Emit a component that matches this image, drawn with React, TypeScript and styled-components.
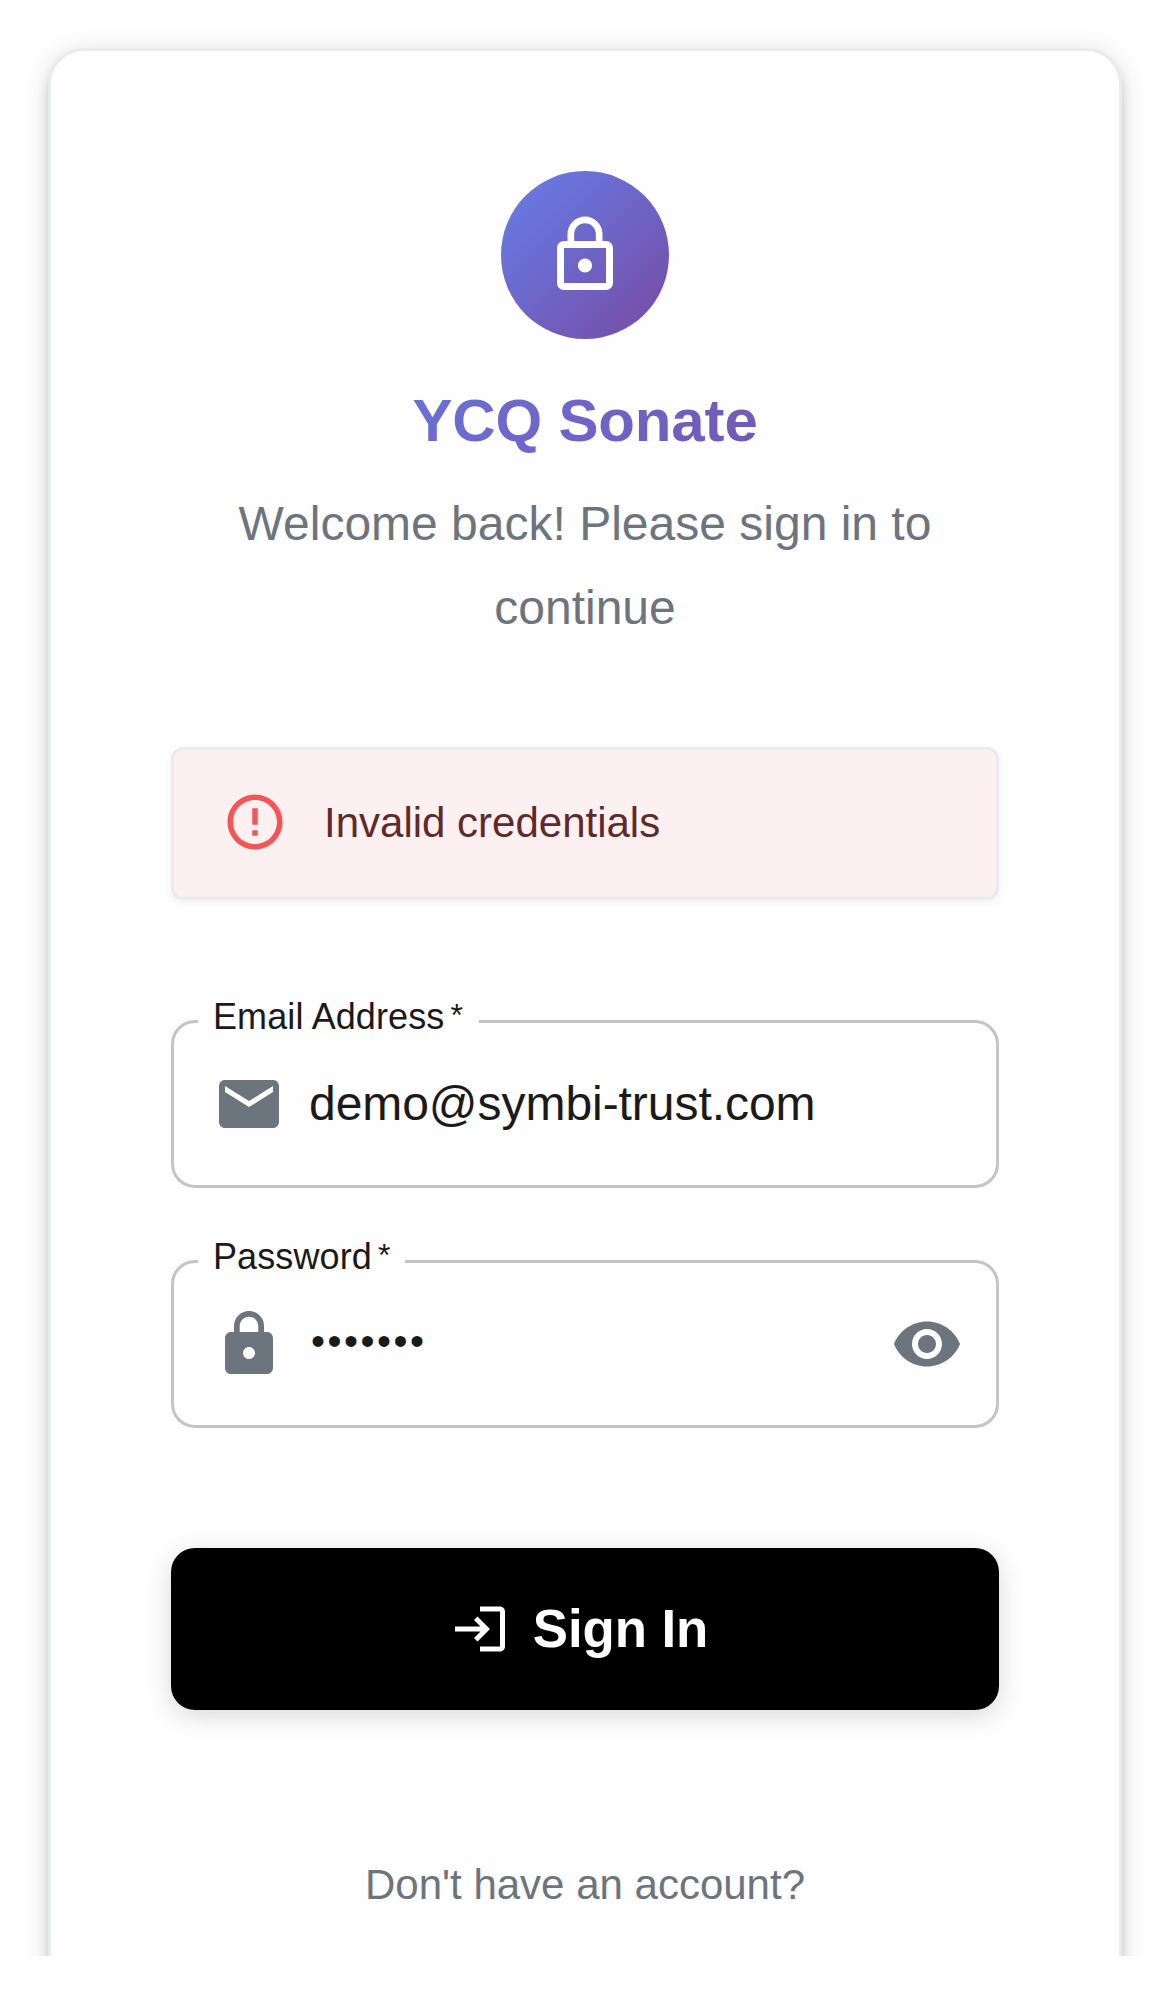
import React from "react";
import styled, { createGlobalStyle } from "styled-components";

const GlobalStyle = createGlobalStyle`
  *, *::before, *::after { box-sizing: border-box; }
  body {
    margin: 0;
    background: #fefefe;
    font-family: "Liberation Sans", Helvetica, Arial, sans-serif;
    color: #1a1a1a;
  }
`;

const Page = styled.main`
  height: 1956px;
  padding: 48px 48px 0;
  overflow: hidden;
  background: #fefefe;
`;

const Card = styled.section`
  display: flex;
  flex-direction: column;
  align-items: stretch;
  min-height: 2040px;
  padding: 120px;
  border: 3px solid #e9ecef;
  border-radius: 36px;
  background: #fefefe;
  box-shadow:
    0 9px 9px -6px rgba(0, 0, 0, 0.2),
    0 9px 12px 0 rgba(0, 0, 0, 0.14),
    0 3px 24px 0 rgba(0, 0, 0, 0.12);
`;

const Header = styled.header`
  display: flex;
  flex-direction: column;
  align-items: center;
  text-align: center;
`;

const Badge = styled.div`
  display: grid;
  place-items: center;
  width: 168px;
  height: 168px;
  border-radius: 50%;
  background: linear-gradient(135deg, #667eea 0%, #764ba2 100%);
`;

const Title = styled.h1`
  align-self: stretch;
  margin: 46px 0 25px;
  font-size: 60px;
  line-height: 72px;
  font-weight: 700;
  letter-spacing: -0.15px;
  color: transparent;
  background: linear-gradient(135deg, #667eea 0%, #764ba2 100%);
  background-clip: text;
  -webkit-background-clip: text;
`;

const Subtitle = styled.p`
  margin: 0;
  font-size: 48px;
  line-height: 84px;
  color: #6c757d;
`;

const Alert = styled.div`
  display: flex;
  align-items: center;
  gap: 36px;
  height: 153px;
  margin-top: 97px;
  padding: 0 48px 3px;
  border: 3px solid #e9ecef;
  border-radius: 12px;
  background: #fdf0f0;
  color: #5f2a2b;
  font-size: 42px;
  line-height: 60px;
  box-shadow: 0 3px 9px rgba(0, 0, 0, 0.05);
`;

const AlertMessage = styled.span`
  padding-top: 2px;
`;

const Form = styled.form`
  display: flex;
  flex-direction: column;
  margin-top: 120px;
`;

const Field = styled.div`
  position: relative;
  display: flex;
  align-items: center;
  gap: 24px;
  height: 168px;
  padding: 0 33px 0 39px;
  border: 3px solid #c4c4c4;
  border-radius: 24px;

  & + & {
    margin-top: 72px;
  }
`;

const Label = styled.label<{ $width: number }>`
  position: absolute;
  top: -30px;
  left: 24px;
  width: ${(p) => p.$width}px;
  padding-left: 15px;
  background: #fefefe;
  font-size: 36px;
  line-height: 48px;
  letter-spacing: 0.1px;
  white-space: nowrap;
`;

const Asterisk = styled.span`
  margin-left: 6px;
  font-size: 32px;
  line-height: 1;
  vertical-align: 3px;
`;

const Input = styled.input`
  flex: 1;
  min-width: 0;
  height: 69px;
  margin: 0 0 2px;
  padding: 0;
  border: 0;
  outline: 0;
  background: transparent;
  color: #1a1a1a;
  font: 400 48px/69px "Liberation Sans", Helvetica, Arial, sans-serif;
  letter-spacing: -0.05px;

  &[type="password"] {
    margin-bottom: 6px;
    padding-left: 2px;
    font-size: 40px;
    letter-spacing: 2.5px;
  }
`;

const IconButton = styled.button`
  display: flex;
  padding: 0;
  border: 0;
  background: none;
  color: #6c757d;
`;

const SubmitButton = styled.button`
  display: flex;
  align-items: center;
  justify-content: center;
  gap: 23px;
  height: 162px;
  margin-top: 120px;
  padding: 0 12px 0 0;
  border: 0;
  border-radius: 24px;
  background: #000;
  color: #fefefe;
  font: 700 52.8px/84px "Liberation Sans", Helvetica, Arial, sans-serif;
  letter-spacing: -0.1px;
  box-shadow: 0 6px 24px rgba(0, 0, 0, 0.15);
`;

const Footer = styled.p`
  margin: 145px 0 0;
  color: #6c757d;
  font-size: 42px;
  line-height: 60px;
  text-align: center;
`;

const Svg = styled.svg<{ $size: number; $color?: string }>`
  flex: none;
  display: block;
  width: ${(p) => p.$size}px;
  height: ${(p) => p.$size}px;
  fill: ${(p) => p.$color ?? "currentColor"};
`;

const paths = {
  lockOutlined:
    "M12 17c1.1 0 2-.9 2-2s-.9-2-2-2-2 .9-2 2 .9 2 2 2zm6-9h-1V6c0-2.76-2.24-5-5-5S7 3.24 7 6v2H6c-1.1 0-2 .9-2 2v10c0 1.1.9 2 2 2h12c1.1 0 2-.9 2-2V10c0-1.1-.9-2-2-2zM8.9 6c0-1.71 1.39-3.1 3.1-3.1s3.1 1.39 3.1 3.1v2H8.9V6zM18 20H6V10h12v10z",
  lock: "M18 8h-1V6c0-2.76-2.24-5-5-5S7 3.24 7 6v2H6c-1.1 0-2 .9-2 2v10c0 1.1.9 2 2 2h12c1.1 0 2-.9 2-2V10c0-1.1-.9-2-2-2zm-6 9c-1.1 0-2-.9-2-2s.9-2 2-2 2 .9 2 2-.9 2-2 2zm3.1-9H8.9V6c0-1.71 1.39-3.1 3.1-3.1 1.71 0 3.1 1.39 3.1 3.1v2z",
  email:
    "M20 4H4c-1.1 0-1.99.9-1.99 2L2 18c0 1.1.9 2 2 2h16c1.1 0 2-.9 2-2V6c0-1.1-.9-2-2-2zm0 4-8 5-8-5V6l8 5 8-5v2z",
  visibility:
    "M12 4.5C7 4.5 2.73 7.61 1 12c1.73 4.39 6 7.5 11 7.5s9.27-3.11 11-7.5c-1.73-4.39-6-7.5-11-7.5zM12 17c-2.76 0-5-2.24-5-5s2.24-5 5-5 5 2.24 5 5-2.24 5-5 5zm0-8c-1.66 0-3 1.34-3 3s1.34 3 3 3 3-1.34 3-3-1.34-3-3-3z",
  error:
    "M11 15h2v2h-2zm0-8h2v6h-2zm.99-5C6.47 2 2 6.48 2 12s4.47 10 9.99 10C17.52 22 22 17.52 22 12S17.52 2 11.99 2zM12 20c-4.42 0-8-3.58-8-8s3.58-8 8-8 8 3.58 8 8-3.58 8-8 8z",
  login:
    "M11 7 9.6 8.4l2.6 2.6H2v2h10.2l-2.6 2.6L11 17l5-5-5-5zm9 12h-8v2h8c1.1 0 2-.9 2-2V5c0-1.1-.9-2-2-2h-8v2h8v14z",
};

function Icon({ name, size, color }: { name: keyof typeof paths; size: number; color?: string }) {
  return (
    <Svg viewBox="0 0 24 24" $size={size} $color={color} aria-hidden="true">
      <path d={paths[name]} />
    </Svg>
  );
}

export default function App() {
  return (
    <>
      <GlobalStyle />
      <Page>
        <Card>
          <Header>
            <Badge>
              <Icon name="lockOutlined" size={84} color="#fff" />
            </Badge>
            <Title>YCQ Sonate</Title>
            <Subtitle>Welcome back! Please sign in to continue</Subtitle>
          </Header>
          <Alert role="alert">
            <Icon name="error" size={66} color="#f55555" />
            <AlertMessage>Invalid credentials</AlertMessage>
          </Alert>
          <Form onSubmit={(e) => e.preventDefault()}>
            <Field>
              <Label htmlFor="email" $width={281}>
                Email Address<Asterisk>*</Asterisk>
              </Label>
              <Icon name="email" size={72} color="#6c757d" />
              <Input id="email" type="text" defaultValue="demo@symbi-trust.com" />
            </Field>
            <Field>
              <Label htmlFor="password" $width={207}>
                Password<Asterisk>*</Asterisk>
              </Label>
              <Icon name="lock" size={72} color="#6c757d" />
              <Input id="password" type="password" defaultValue="demo123" />
              <IconButton type="button" aria-label="Show password">
                <Icon name="visibility" size={72} />
              </IconButton>
            </Field>
            <SubmitButton type="submit">
              <Icon name="login" size={60} />
              Sign In
            </SubmitButton>
          </Form>
          <Footer>Don't have an account?</Footer>
        </Card>
      </Page>
    </>
  );
}
